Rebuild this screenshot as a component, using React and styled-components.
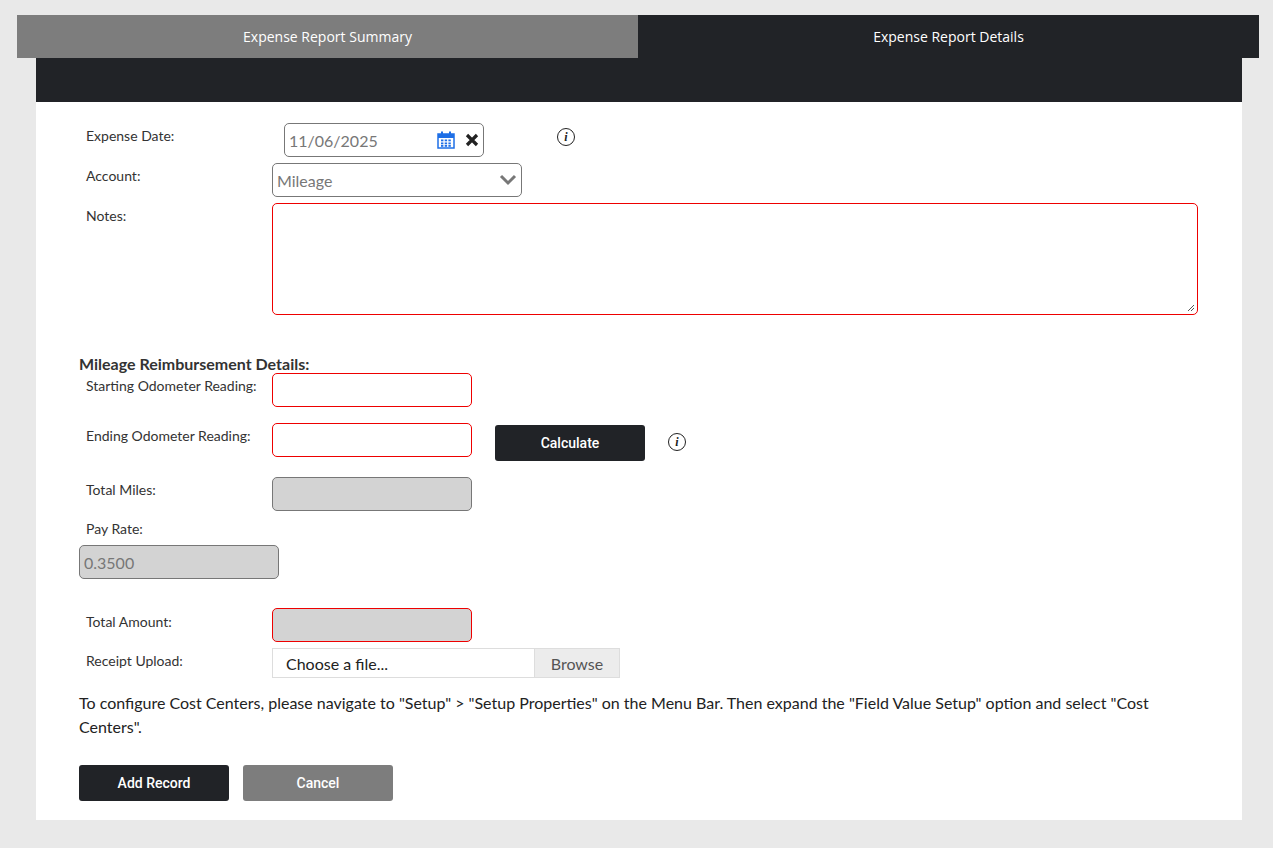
import React from "react";
import styled, { createGlobalStyle } from "styled-components";

const G = createGlobalStyle`
  body { margin:0; background:#e9e9e9; font-family: Lato, "Open Sans", sans-serif; color:#222; }
`;
const Wrap = styled.div`padding:15px 14px 30px 17px;`;
const Tabs = styled.div`display:flex; height:43px; width:1242px;`;
const Tab = styled.div`
  flex:1; display:flex; align-items:center; justify-content:center;
  background:${p => p.$active ? "#212327" : "#7d7d7d"}; color:#fff;
  font-size:14px; font-family:"Open Sans", sans-serif; font-weight:500;
`;
const Band = styled.div`margin:0 17px 0 19px; height:44px; background:#212327;`;
const Panel = styled.div`margin:0 17px 0 19px; background:#fff; padding:21px 44px 19px 43px;`;
const Row = styled.div`display:flex; align-items:flex-start; margin-bottom:${p => p.$mb ?? 6}px;`;
const Label = styled.div`
  width:193px; flex:none; font-size:14px; line-height:25px; text-indent:7px; padding-top:${p => p.$pt ?? 0}px; color:#333;
`;
const Input = styled.div`
  box-sizing:border-box; width:${p => p.$w ?? 200}px; height:${p => p.$h ?? 34}px;
  border:1px solid ${p => p.$red ? "#e00" : "#777"}; border-radius:5px;
  background:${p => p.$gray ? "#d3d3d3" : "#fff"};
  display:flex; align-items:center; padding:0 4px; font-size:16px; color:#777; position:relative;
  margin-left:${p => p.$ml ?? 0}px;
`;
const Icons = styled.div`margin-left:auto; display:flex; align-items:center; gap:10px;`;
const Info = styled.span`
  display:inline-flex; width:16px; height:16px; border:1.5px solid #222; border-radius:50%;
  align-items:center; justify-content:center; font:bold italic 12px "Liberation Serif", serif; color:#222;
  margin-left:${p => p.$ml}px; margin-top:${p => p.$mt ?? 0}px;
`;
const Heading = styled.div`font-weight:700; font-size:16px; margin:39px 0 0 0; color:#333;`;
const Btn = styled.button`
  width:150px; height:36px; border:none; border-radius:3px; color:#fff;
  background:${p => p.$gray ? "#7d7d7d" : "#212327"}; font:500 14px Roboto, sans-serif;
  margin-left:${p => p.$ml ?? 0}px;
`;
const File = styled.div`display:flex; width:348px; height:30px; border:1px solid #ddd; box-sizing:border-box; font-size:16px;`;
const FileName = styled.div`flex:1; padding-left:13px; display:flex; align-items:center; color:#222;`;
const Browse = styled.div`width:84px; background:#ececec; border-left:1px solid #ddd; display:flex; align-items:center; justify-content:center; color:#555;`;
const Para = styled.p`font-size:16px; line-height:24px; margin:13px 0 26px; color:#222;`;
const Grip = styled.svg`position:absolute; right:2px; bottom:2px;`;

const Calendar = () => (
  <svg width="18" height="18" viewBox="0 0 18 18">
    <rect x="1" y="3" width="16" height="14" fill="none" stroke="#1e6fe6" strokeWidth="1.5"/>
    <rect x="1" y="3" width="16" height="4" fill="#1e6fe6"/>
    <rect x="4" y="0.5" width="2" height="4" fill="#1e6fe6"/><rect x="12" y="0.5" width="2" height="4" fill="#1e6fe6"/>
    {[5.3,9,12.7].map(x=>[9.5,12.5,15].map(y=><rect key={x+"-"+y} x={x-1.3} y={y-1} width="2.4" height="1.8" fill="#1e6fe6"/>))}
  </svg>
);

export default function App() {
  return (
    <Wrap>
      <G />
      <Tabs><Tab>Expense Report Summary</Tab><Tab $active>Expense Report Details</Tab></Tabs>
      <Band />
      <Panel>
        <Row>
          <Label>Expense Date:</Label>
          <Input $ml={12}>11/06/2025<Icons><Calendar /><svg width="14" height="14" viewBox="0 0 14 14"><path d="M2 2L12 12M12 2L2 12" stroke="#222" strokeWidth="3.2"/></svg></Icons></Input>
          <Info $ml={73} $mt={5}>i</Info>
        </Row>
        <Row>
          <Label>Account:</Label>
          <Input $w={250}>Mileage<Icons><svg width="18" height="12" viewBox="0 0 18 12"><path d="M2 2L9 9L16 2" fill="none" stroke="#777" strokeWidth="3"/></svg></Icons></Input>
        </Row>
        <Row>
          <Label>Notes:</Label>
          <Input $w={926} $h={112} $red>
            <Grip width="8" height="8" viewBox="0 0 8 8"><path d="M7 1L1 7M7 4L4 7" stroke="#555"/></Grip>
          </Input>
        </Row>
        <Heading>Mileage Reimbursement Details:</Heading>
        <Row $mb={16}>
          <Label>Starting Odometer Reading:</Label>
          <Input $red />
        </Row>
        <Row $mb={16}>
          <Label>Ending Odometer Reading:</Label>
          <Input $red />
          <Btn $ml={23} style={{marginTop:2}}>Calculate</Btn>
          <Info $ml={23} $mt={10}>i</Info>
        </Row>
        <Row $mb={5}>
          <Label>Total Miles:</Label>
          <Input $gray />
        </Row>
        <Label>Pay Rate:</Label>
        <Row $mb={29} style={{marginTop:4}}><Input $gray>0.3500</Input></Row>
        <Row>
          <Label $pt={1}>Total Amount:</Label>
          <Input $red $gray />
        </Row>
        <Row>
          <Label>Receipt Upload:</Label>
          <File><FileName>Choose a file...</FileName><Browse>Browse</Browse></File>
        </Row>
        <Para>To configure Cost Centers, please navigate to "Setup" &gt; "Setup Properties" on the Menu Bar. Then expand the "Field Value Setup" option and select "Cost Centers".</Para>
        <Row $mb={0}><Btn>Add Record</Btn><Btn $gray $ml={14}>Cancel</Btn></Row>
      </Panel>
    </Wrap>
  );
}
